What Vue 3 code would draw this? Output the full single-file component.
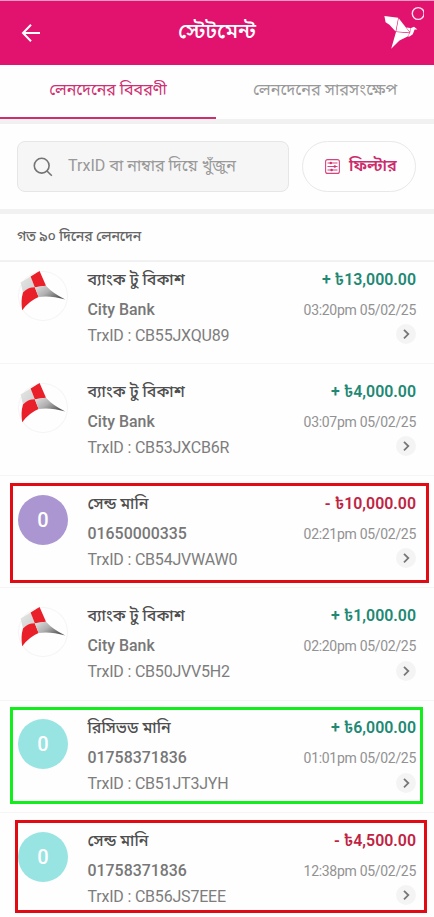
<script setup>
const rows = [
  { title: 'ব্যাংক টু বিকাশ', who: 'City Bank', trx: 'CB55JXQU89', sign: '+', amount: '13,000.00', time: '03:20pm 05/02/25', kind: 'logo' },
  { title: 'ব্যাংক টু বিকাশ', who: 'City Bank', trx: 'CB53JXCB6R', sign: '+', amount: '4,000.00', time: '03:07pm 05/02/25', kind: 'logo' },
  { title: 'সেন্ড মানি', who: '01650000335', trx: 'CB54JVWAW0', sign: '-', amount: '10,000.00', time: '02:21pm 05/02/25', kind: 'violet', mark: 'mark-a' },
  { title: 'ব্যাংক টু বিকাশ', who: 'City Bank', trx: 'CB50JVV5H2', sign: '+', amount: '1,000.00', time: '02:20pm 05/02/25', kind: 'logo' },
  { title: 'রিসিভড মানি', who: '01758371836', trx: 'CB51JT3JYH', sign: '+', amount: '6,000.00', time: '01:01pm 05/02/25', kind: 'aqua', mark: 'mark-b' },
  { title: 'সেন্ড মানি', who: '01758371836', trx: 'CB56JS7EEE', sign: '-', amount: '4,500.00', time: '12:38pm 05/02/25', kind: 'aqua', mark: 'mark-c' },
]
</script>

<template>
  <div class="screen">
    <header class="bar">
      <svg class="back" width="20" height="20" viewBox="0 0 20 20"><path d="M10 1.8 2 10l8 8.2M2.3 10H19" fill="none" stroke="#fff" stroke-width="2" /></svg>
      <h1>স্টেটমেন্ট</h1>
      <svg class="bird" width="44" height="50" viewBox="0 0 44 50">
        <g fill="#fff">
          <path d="M4.4 12 18.2 13.8 15.6 27.4 9.4 20.8 5.6 18.2z" />
          <path d="M18.7 14.2 29.8 28.6 16.2 27.5z" />
          <path d="M16 28.1 29.4 29.2 27.6 32.4 19.5 36.4 11.2 44.8z" />
          <path d="M26.2 23.6 30.4 24 29.8 27.8z" />
          <path d="M30.6 24.2 34 22.8 37.4 25.4 34.6 25.4 32.8 30.2 29.6 32.4 27.8 32.6 30.2 28.6z" />
        </g>
        <circle cx="38.2" cy="9.5" r="5.9" fill="none" stroke="#fde3ef" stroke-width="1.4" />
      </svg>
    </header>

    <nav class="tabs">
      <div class="tab active"><span>লেনদেনের বিবরণী</span></div>
      <div class="tab"><span>লেনদেনের সারসংক্ষেপ</span></div>
    </nav>

    <section class="tools">
      <div class="search">
        <svg width="20" height="20" viewBox="0 0 20 20"><g fill="none" stroke="#747474" stroke-width="1.6"><circle cx="8.7" cy="8.7" r="7.4" /><path d="m14 14 4.8 4.8" /></g></svg>
        <span>TrxID বা নাম্বার দিয়ে খুঁজুন</span>
      </div>
      <div class="filter">
        <svg width="15" height="15" viewBox="0 0 15 15">
          <rect x=".6" y=".6" width="13.8" height="13.8" rx="2" fill="none" stroke="#d8437e" stroke-width="1.1" />
          <path d="M2.5 4h10M2.5 7.5h10M2.5 11h10" stroke="#d8437e" />
          <g fill="#cf2d6d"><circle cx="5.8" cy="4" r="1.2" /><circle cx="9.8" cy="7.5" r="1.2" /><circle cx="6.6" cy="11" r="1.2" /></g>
        </svg>
        <span>ফিল্টার</span>
      </div>
    </section>

    <div class="period">গত ৯০ দিনের লেনদেন</div>

    <main class="list">
      <article v-for="r in rows" :key="r.trx" class="row">
        <div v-if="r.kind === 'logo'" class="avatar logo">
          <svg width="50" height="50" viewBox="0 0 50 50">
            <defs>
              <linearGradient id="silver" x1="0" x2="1" y1="0" y2=".6"><stop offset="0" stop-color="#e2e2e2" /><stop offset=".5" stop-color="#b0b0b0" /><stop offset="1" stop-color="#555" /></linearGradient>
              <linearGradient id="pale" x1="0" x2="1" y1="0" y2="1"><stop offset="0" stop-color="#e6e6e6" /><stop offset="1" stop-color="#cfcfcf" /></linearGradient>
            </defs>
            <path d="M12.6 5.4 2.6 11.6 5 21.8Q10 16.2 16.8 16.2z" fill="url(#pale)" />
            <path d="M12.6 5.4 21.6 0 28 14.8 16.8 16.2z" fill="#e9202a" />
            <path d="M5 21.6Q10 16 16.8 16.2L20.6 26Q11 30 4.2 39.2 2.6 29.6 5 21.6z" fill="#e9202a" />
            <path d="M16.8 16.2 28 14.8Q35 22.6 47.2 28.4 32 24.2 20.6 26z" fill="url(#silver)" />
          </svg>
        </div>
        <div v-else class="avatar" :class="r.kind">0</div>
        <div class="info">
          <div class="title">{{ r.title }}</div>
          <div class="who">{{ r.who }}</div>
          <div class="trx">TrxID : {{ r.trx }}</div>
        </div>
        <div class="side">
          <div class="amount" :class="{ out: r.sign === '-' }">{{ r.sign }} ৳{{ r.amount }}</div>
          <div class="time">{{ r.time }}</div>
          <div class="go"><svg width="20" height="20" viewBox="0 0 20 20"><path d="m8 5.8 4.3 4.3L8 14.4" fill="none" stroke="#777" stroke-width="1.8" /></svg></div>
        </div>
        <div v-if="r.mark" class="mark" :class="r.mark"></div>
      </article>
    </main>
  </div>
</template>

<style>
body { margin: 0; background: #fff; }
</style>

<style scoped>
* { box-sizing: border-box; }
.screen { width: 434px; height: 917px; overflow: hidden; background: #fefefe; font-family: Roboto, "Noto Sans", "Noto Sans Bengali", sans-serif; white-space: nowrap; }
.bar { height: 65px; border-top: 1px solid #f29bc3; background: #e2136e; display: grid; grid-template-columns: 60px 1fr 60px; align-items: center; }
.back { margin-left: 21px; }
.bar h1 { margin: 0; padding-bottom: 4px; text-align: center; color: #fff; font-size: 21.3px; font-weight: 500; line-height: 30px; }
.bird { align-self: start; margin: 3px 0 0 6px; }
.tabs { height: 59px; display: grid; grid-template-columns: 216px 218px; border-bottom: 5px solid #f1f1f1; }
.tab { height: 54px; display: flex; justify-content: center; align-items: center; padding-bottom: 3px; color: #999; font-size: 16.3px; }
.tab.active { color: #ce3072; border-bottom: 2px solid #cf2e6d; padding-bottom: 1px; font-size: 16px; }
.tools { height: 90px; padding: 17px 18px 0 17px; display: flex; gap: 13px; border-bottom: 5px solid #f1f1f1; }
.search { width: 272px; height: 51px; border: 1.5px solid #e6e6e6; border-radius: 8px; background: #f6f6f6; display: flex; align-items: center; gap: 15px; padding-left: 15px; color: #999; font-size: 16.1px; }
.filter { width: 114px; height: 51px; border: 1.5px solid #e8e8e8; border-radius: 26px; display: flex; align-items: center; gap: 9px; padding-left: 22px; color: #cc2c6c; font-size: 16.2px; font-weight: 600; }
.period { height: 48px; border-bottom: 2px solid #f1f1f1; padding-left: 17px; line-height: 44px; color: #666; font-size: 14px; font-weight: 500; letter-spacing: -0.1px; }
.list { display: flex; flex-direction: column; }
.row { position: relative; flex: none; height: 112.2px; padding: 14.8px 18px 0 18px; display: grid; grid-template-columns: 69.5px 1fr auto; border-bottom: 1.5px solid #f5f5f5; }
.row:first-child { height: 102px; padding-top: 4.8px; }
.avatar { width: 50px; height: 50px; margin-top: 4px; border-radius: 50%; display: flex; align-items: center; justify-content: center; color: #fff; font-size: 20px; font-weight: 500; }
.logo { box-shadow: 0 0 0 1px #f4f4f4 inset; }
.violet { background: #ab96d2; }
.aqua { background: #98e4e3; }
.title { height: 31px; line-height: 25px; font-size: 16px; font-weight: 500; color: #4e4e4e; }
.who { height: 25px; line-height: 24px; font-size: 15.9px; font-weight: 500; color: #777; }
.trx { line-height: 25px; font-size: 16px; letter-spacing: -0.2px; color: #7d7d7d; }
.side { display: flex; flex-direction: column; align-items: flex-end; }
.amount { height: 31px; line-height: 25px; font-size: 15.9px; font-weight: 600; color: #208873; }
.amount.out { color: #c02342; }
.time { height: 26.5px; line-height: 24px; font-size: 14px; letter-spacing: -0.3px; color: #929292; }
.go { width: 20px; height: 20px; border-radius: 50%; background: #f4f4f4; display: flex; }
.mark { position: absolute; border: 3px solid #e30b13; }
.mark-a { left: 10px; top: 7px; width: 419px; height: 100px; }
.mark-b { left: 10px; top: 6px; width: 413px; height: 97px; border-color: #12ee1b; }
.mark-c { left: 15px; top: 7px; width: 412px; height: 93px; }
</style>
